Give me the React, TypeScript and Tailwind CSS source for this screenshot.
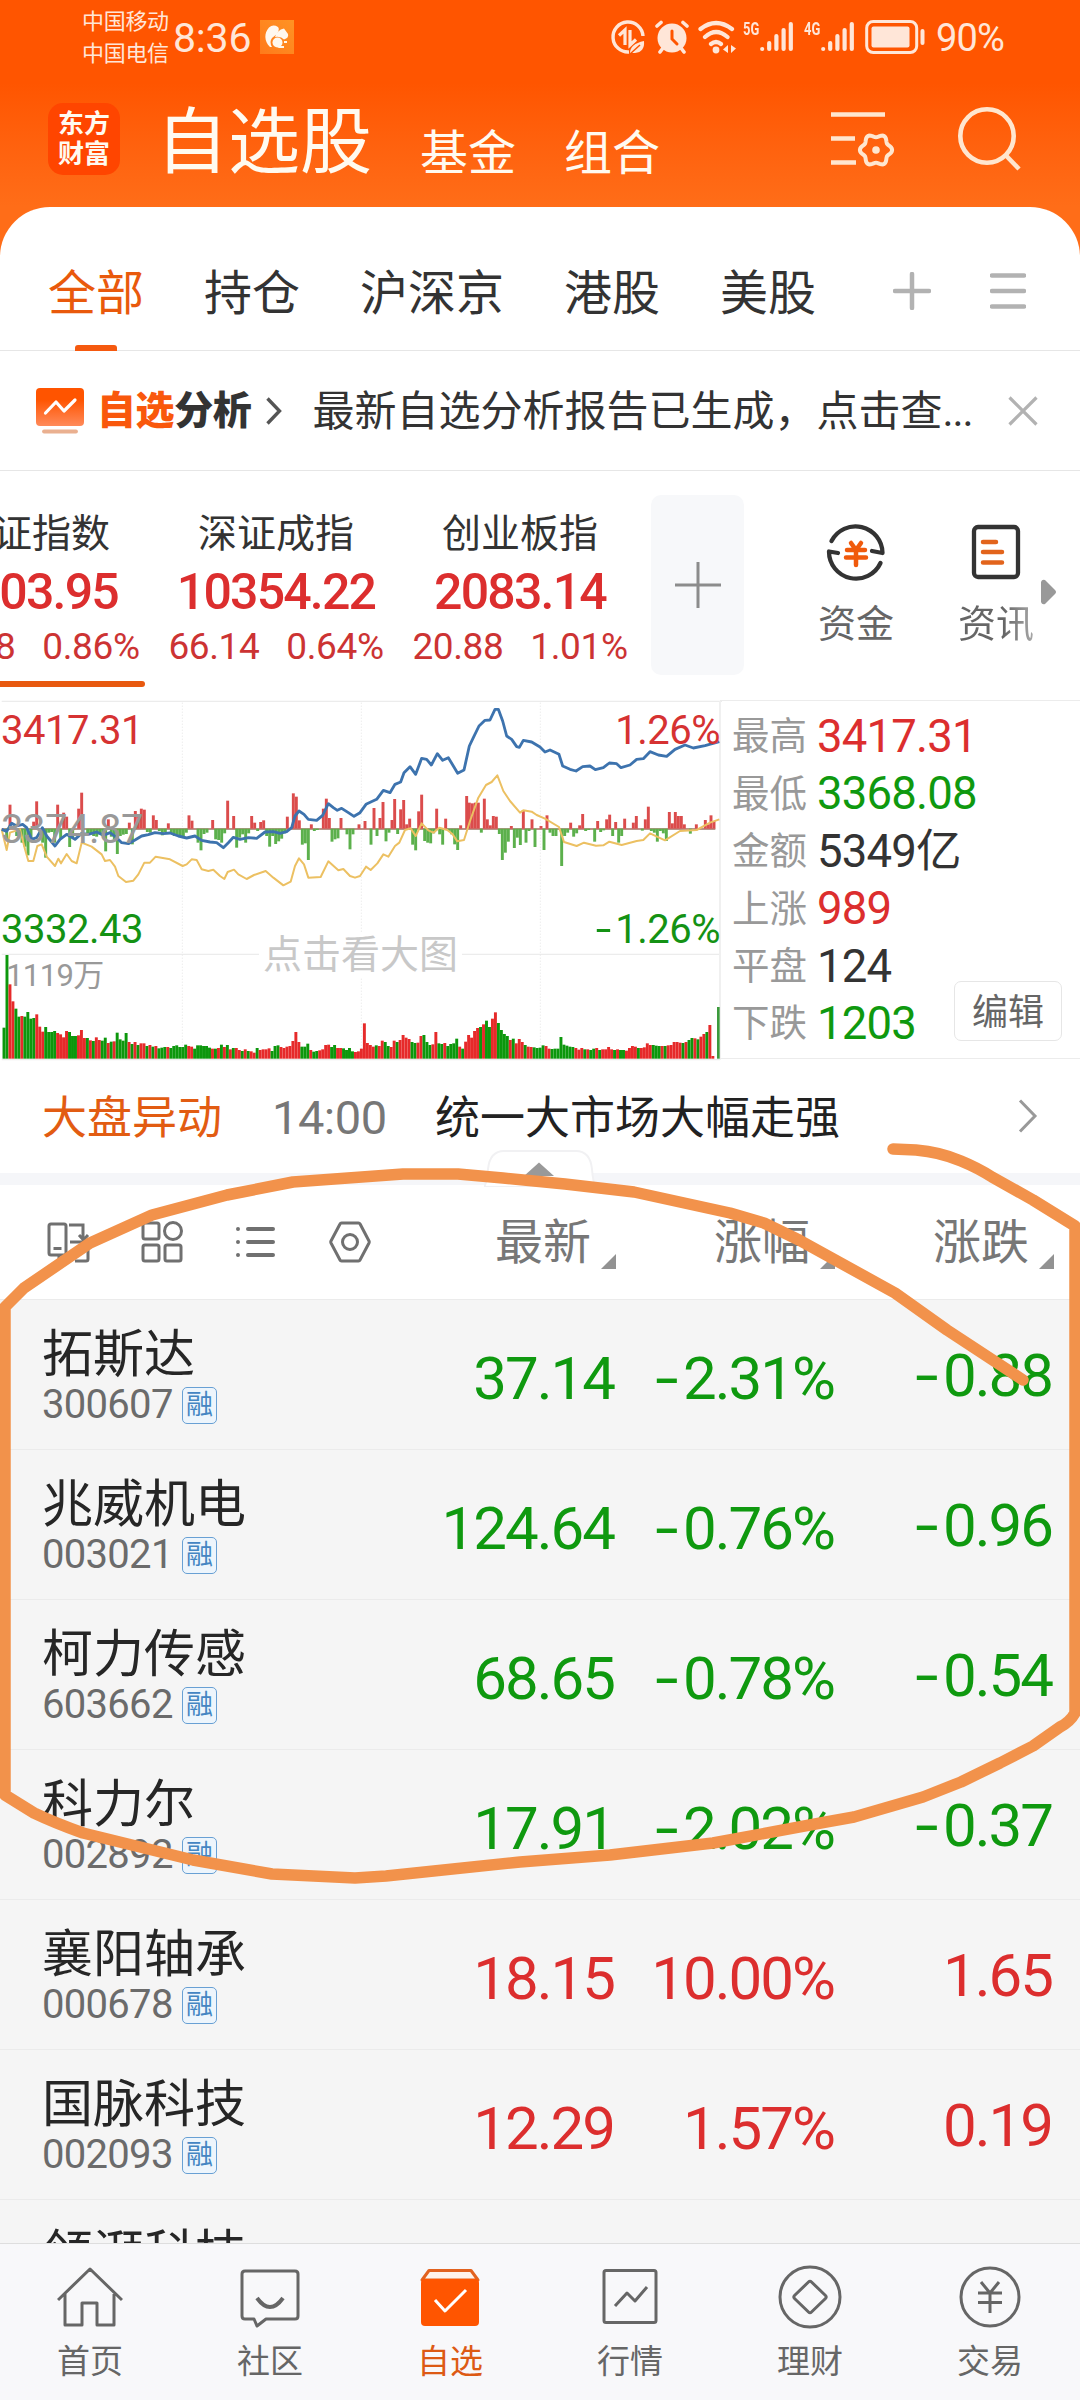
import React from "react";

const RED = "#dc2e2e";
const GREEN = "#0f990f";

/* Volume bar tops, one per minute, on a 0–1088 scale */
const volume =
  "995g 777g 865r 916r 938g 962g 960r 962g 948g 968g 966g 955r 992r 1007r 993g 1008g 1008g 1005g 1011r 1015r 1024r 1005r 1008g 1020g 1020g 1018r 1002r 1026r 1026g 1033r 1035g 1024r 1032r 1034g 1025g 1041r 1037g 1036r 1010g 1030g 1034g 1011g 1038r 1044g 1038r 1047g 1042r 1042r 1050g 1047r 1052g 1050r 1057g 1055g 1053g 1053r 1056g 1050g 1048g 1053g 1053g 1046g 1050r 1052r 1058g 1048g 1048g 1050g 1050g 1055g 1058r 1058g 1056r 1046g 1053r 1047g 1060r 1056g 1056r 1062r 1065g 1060r 1065g 1066r 1070r 1056g 1062r 1060r 1060r 1057r 1065g 1050g 1048g 1053r 1056r 1052r 1050r 1035r 1008r 1038r 1052g 1052g 1043g 1062r 1067g 1065g 1063r 1060r 1047r 1046r 1053g 1047g 1056r 1056r 1057g 1062g 1056g 1066g 1068r 1066r 1058r 982r 1041r 1047r 1052r 1048g 1050r 1034r 1038g 1050g 1053r 1034r 1038g 1032r 1017r 1025r 1029r 1038g 1041g 1040r 1020r 1017g 1038g 1047g 1045r 1008r 1042g 1044g 1041r 1050g 1044g 1042g 1028g 1052r 1058g 1037r 1017r 1025r 1005r 996r 993g 985r 974g 993g 968r 949r 981g 1002g 1014g 1020g 1032r 1028g 1042r 1029r 1038r 1047g 1052r 1053r 1054g 1056g 1055g 1048g 1050r 1058r 1059g 1058g 1058g 1023g 1046g 1049g 1052g 1053g 1056r 1061r 1056r 1060g 1060r 1062g 1058g 1056r 1062g 1060r 1060r 1053r 1060r 1062g 1060r 1062g 1062g 1064r 1056r 1050r 1052r 1056g 1056r 1054r 1042r 1047r 1047g 1049g 1050g 1050r 1050g 1048r 1047r 1038r 1038r 1040r 1041g 1038r 1032g 1026g 1027r 1030g 1022r 1014r 1008g 987r 1080r".split(
    " "
  );

/* Momentum bars around the zero line: x,y pairs; y above 398 is a gain */
const momentum =
  "30,326 101,377 110,316 173,326 191,350 200,362 236,338 245,290 325,370 388,380 406,345 415,358 424,338 433,341 460,358 469,372 505,382 567,358 576,374 638,372 683,314 701,360 755,360 764,380 782,378 791,373 862,362 880,292 889,302 898,373 934,385 970,338 979,308 988,366 1023,366 1077,385 1095,375 1122,336 1140,366 1149,318 1176,372 1184,309 1202,340 1211,312 1220,385 1229,368 1256,346 1265,296 1310,338 1337,368 1382,388 1400,300 1408,320 1417,322 1426,320 1435,320 1453,308 1462,370 1471,388 1480,360 1489,362 1534,390 1570,342 1596,370 1623,390 1641,358 1712,380 1739,388 1748,354 1793,375 1820,370 1829,356 1847,378 1874,368 1900,380 1909,360 1936,370 1945,332 2008,348 2017,382 2026,348 2035,360 2044,360 2053,385 2089,385 2116,372 2125,385 2133,358 2142,375 20,430 50,420 66,440 75,452 84,478 93,430 128,440 137,485 146,410 155,408 164,440 182,428 209,453 218,425 263,415 272,412 281,420 290,422 299,415 308,420 317,466 334,422 343,430 352,474 361,420 370,416 379,414 397,445 442,408 451,410 478,405 487,418 496,408 514,412 523,420 532,418 541,422 550,420 559,410 594,440 603,463 612,414 621,410 647,430 656,432 665,440 674,412 710,455 719,425 728,415 737,440 746,412 773,405 800,420 809,452 818,420 827,444 836,436 845,428 854,412 907,446 916,442 925,492 943,405 952,402 996,437 1005,430 1014,427 1041,415 1050,460 1059,415 1113,446 1131,420 1158,436 1167,410 1193,414 1238,446 1247,463 1274,435 1283,440 1292,442 1301,412 1319,415 1328,446 1346,405 1355,415 1364,445 1373,462 1444,410 1498,414 1507,492 1516,470 1525,437 1543,456 1552,425 1561,447 1578,440 1587,405 1605,453 1632,462 1650,410 1659,420 1668,420 1685,510 1694,420 1703,410 1721,422 1730,412 1757,405 1766,402 1784,437 1802,408 1811,403 1838,420 1856,440 1865,420 1927,404 1954,405 1963,410 1972,437 1981,405 1990,412 1999,435 2071,413"
    .split(" ")
    .map((p) => p.split(",").map(Number));

const priceLine =
  "5,400 20,406 35,382 50,390 68,385 80,395 95,430 110,425 127,395 140,420 155,438 165,450 180,430 200,415 225,430 245,412 265,415 290,408 310,418 330,410 350,425 365,440 385,443 405,432 425,420 445,416 465,410 490,413 510,411 535,420 560,426 585,420 605,433 630,438 650,440 670,455 685,440 700,424 720,430 745,425 770,427 795,408 820,407 840,412 860,407 875,395 885,360 897,345 912,355 925,370 950,373 968,358 985,323 1000,335 1012,343 1025,337 1045,350 1062,361 1080,350 1098,325 1130,310 1150,283 1170,290 1185,265 1202,258 1212,230 1230,212 1247,235 1265,187 1280,190 1294,207 1312,173 1328,193 1345,185 1360,210 1373,232 1392,222 1408,150 1420,125 1437,90 1455,73 1470,72 1485,40 1495,40 1508,75 1520,120 1535,130 1550,152 1558,154 1570,133 1595,138 1620,153 1635,168 1650,162 1677,175 1688,210 1710,220 1728,225 1748,212 1770,210 1786,221 1810,215 1828,201 1850,203 1863,215 1890,207 1910,190 1930,188 1950,167 1975,177 2000,181 2025,160 2055,147 2080,156 2115,149 2158,137";

const averageLine =
  "5,400 20,462 30,410 60,400 75,460 85,495 100,495 112,450 125,445 140,482 165,510 175,488 183,502 200,474 215,495 230,502 245,440 275,452 305,475 315,495 330,492 345,512 355,540 378,558 400,554 415,535 433,500 450,500 467,482 510,490 548,510 560,505 575,490 590,492 605,520 625,525 640,521 660,540 673,549 683,528 702,521 715,535 740,549 762,537 797,525 820,545 850,568 872,557 885,510 897,487 912,505 925,545 962,543 985,496 1015,523 1030,519 1050,540 1065,545 1080,540 1098,512 1112,522 1132,502 1150,475 1165,482 1185,450 1198,440 1215,402 1232,397 1247,420 1265,382 1285,403 1300,410 1318,395 1342,402 1358,415 1372,436 1392,432 1410,375 1435,305 1458,267 1475,258 1492,238 1510,285 1530,315 1560,350 1570,343 1595,347 1610,357 1635,368 1677,393 1692,438 1730,450 1752,440 1788,449 1810,448 1828,437 1865,447 1910,435 1930,432 1950,412 1995,433 2040,405 2090,402 2130,380 2158,370";

const marker =
  "M893 1149L916 1150Q940 1152 961 1161Q978 1168 992 1177L1033 1200L1075 1226V1713Q1070 1722 1060 1727L1033 1746L1000 1763L961 1782L923 1797L854 1817L826 1822L713 1843L610 1855L520 1862L386 1876L355 1878L272 1874L193 1860L83 1833Q55 1823 34 1813L5 1795V1307L24 1288L90 1243L152 1215L227 1195L293 1182L403 1174H458L503 1178L565 1184L634 1192L730 1213L764 1223L799 1240L895 1293L947 1330L1023 1380";

const gear =
  Array.from({ length: 72 }, (_, i) => {
    const a = (i / 72) * Math.PI * 2;
    const r = 14.4 + 1.7 * Math.cos(6 * a);
    return `${i ? "L" : "M"}${(45 + r * Math.cos(a)).toFixed(2)} ${(39 + r * Math.sin(a)).toFixed(2)}`;
  }).join("") + "Z";

function Signal({ label }: { label: string }) {
  return (
    <div className="flex h-[32px] items-start">
      <span className="w-[17px] origin-left scale-x-[0.72] text-[18px] font-bold leading-[15px]">{label}</span>
      <svg width="34" height="32" viewBox="0 0 34 32" stroke="currentColor" strokeWidth="4.2" strokeLinecap="round">
        <path d="M2.2 28v0M9.2 22v6M16.4 15v13M23.6 9v19M30.8 3v25" />
      </svg>
    </div>
  );
}

function StatusBar() {
  return (
    <div className="flex h-[74px] items-center pl-[82px] text-[#ffe6d8]">
      <div className="w-[91px] pt-[1px] text-[22px] leading-[32px] tracking-[-0.3px]">
        <div>中国移动</div>
        <div>中国电信</div>
      </div>
      <div className="w-[87px] pt-[2px] text-[41px] leading-none tracking-[-0.2px]">8:36</div>
      <div className="h-[34px] w-[34px] bg-gradient-to-tr from-[#ff7a1a] to-[#ff9324]">
        <svg width="34" height="34" viewBox="0 0 34 34" fill="#fff8ee">
          <path d="M10 27C4 21 4 13 9 7.500Q13 4 18 7Q20 9 17 14L12 18Q9 22 12 27Z" />
          <path d="M15 17Q17 10 24 8.500L28 14Q29 18 24 19.500Q21 16 15 17Z" />
          <circle cx="17.500" cy="22.500" r="5" />
          <path d="M19 26h5v2h-6zM24 21h3v2h-3z" />
        </svg>
      </div>
      <div className="ml-[316px] flex items-center">
        <svg width="36" height="36" viewBox="0 0 36 36" fill="none" stroke="currentColor">
          <path d="M33 17A15 15 0 1 0 19 33" strokeWidth="3.400" />
          <path d="M15 26V11L9 16.500M20 11V26L26 20.500" strokeWidth="3.200" />
          <path d="M20 34Q20 25 34 22Q35 33 25 34Z" fill="currentColor" stroke="none" />
          <path d="M20 35L30 26" stroke="#ff5500" strokeWidth="1.500" />
        </svg>
        <svg className="ml-[9px]" width="34" height="36" viewBox="0 0 34 36" fill="none" stroke="currentColor" strokeWidth="3.600" strokeLinecap="round">
          <circle cx="17" cy="19" r="14.500" fill="currentColor" stroke="none" />
          <path d="M2 7L6 3.500M32 7L28 3.500M5 33L8 29M29 33L26 29" />
          <path d="M17 12v8l5 5" stroke="#ff5500" strokeWidth="3" />
        </svg>
        <svg className="ml-[9px]" width="40" height="36" viewBox="0 0 40 36" fill="none" stroke="currentColor" strokeWidth="4.200" strokeLinecap="round">
          <path d="M2.500 10Q18 -2 34 10M7 18Q18 8 29.500 18M13 25Q18 21 23 25" />
          <circle cx="18" cy="31" r="3.400" fill="currentColor" stroke="none" />
          <path d="M30 26v8l-5-3.500zM33 26v8l5-4.500z" fill="currentColor" stroke="none" />
        </svg>
        <div className="ml-[5px] flex gap-[10px]">
          <Signal label="5G" />
          <Signal label="4G" />
        </div>
        <svg className="ml-[10px]" width="62" height="36" viewBox="0 0 62 36" fill="none" stroke="currentColor">
          <rect x="1.700" y="2.500" width="50" height="31" rx="6.500" strokeWidth="3" />
          <rect x="6.500" y="7.500" width="38" height="21" rx="2" fill="currentColor" stroke="none" />
          <path d="M57.500 12v12" strokeWidth="4" strokeLinecap="round" />
        </svg>
        <span className="ml-[9px] pt-[2px] text-[38px] leading-none tracking-[-0.9px]">90%</span>
      </div>
    </div>
  );
}

function Header() {
  return (
    <div className="flex h-[133px] items-center pl-[48px] text-[#fffaf0]">
      <div className="mt-[-3px] flex h-[72px] w-[72px] flex-col items-center justify-center rounded-[15px] bg-[#ff4500] text-[26px] font-bold leading-[30px]">
        <span>东方</span>
        <span>财富</span>
      </div>
      <span className="ml-[36px] pt-[4px] text-[72px] leading-none">自选股</span>
      <span className="ml-[48px] pt-[26px] text-[48px] leading-none">基金</span>
      <span className="ml-[48px] pt-[26px] text-[48px] leading-none">组合</span>
      <svg className="ml-[171px] mt-[-2px] text-[#ffe6cf]" width="64" height="60" viewBox="0 0 64 60" fill="none" stroke="currentColor" strokeWidth="4.500">
        <path d="M0 4.500h54M0 28.500h24M0 52.500h25" />
        <path d={gear} transform="translate(0 1)" strokeWidth="4" />
        <circle cx="45" cy="40" r="3.800" fill="currentColor" stroke="none" />
      </svg>
      <svg className="ml-[61px] mt-[-5px] text-[#ffe6cf]" width="68" height="68" viewBox="0 0 68 68" fill="none" stroke="currentColor" strokeWidth="4.600">
        <circle cx="31" cy="32" r="26.700" />
        <path d="M49.500 51L63 65" />
      </svg>
    </div>
  );
}

function Tabs() {
  const tabs = ["全部", "持仓", "沪深京", "港股", "美股"];
  return (
    <div className="flex h-[144px] items-center border-b border-[#e6e6e6] pl-[48px] pt-[26px] text-[48px] leading-none text-[#333]">
      <div className="flex items-center gap-[60px] pt-[4px]">
        {tabs.map((t, i) => (
          <div key={t} className={i === 0 ? "relative text-[#e9590c]" : "relative"}>
            {t}
            {i === 0 && <div className="absolute bottom-[-33px] left-[27px] h-[6px] w-[42px] rounded-t-[3px] bg-[#f5590f]" />}
          </div>
        ))}
      </div>
      <svg className="ml-[77px] mt-[-2px]" width="38" height="38" viewBox="0 0 38 38" stroke="#b2b2b2" strokeWidth="4.500" strokeLinecap="round">
        <path d="M2 19h34M19 2v34" />
      </svg>
      <svg className="ml-[59px] mt-[-2px]" width="36" height="38" viewBox="0 0 36 38" stroke="#b2b2b2" strokeWidth="4.500" strokeLinecap="round">
        <path d="M2 3.500h32M2 19h32M2 34.500h32" />
      </svg>
    </div>
  );
}

function Notice() {
  return (
    <div className="flex h-[120px] items-center border-b border-[#e6e6e6] pl-[36px]">
      <svg width="48" height="48" viewBox="0 0 48 48" fill="none">
        <defs>
          <linearGradient id="noticeFill" x1="0" y1="0" x2="0" y2="1">
            <stop offset="0.300" stopColor="#ff5400" />
            <stop offset="1" stopColor="#ff8a5a" />
          </linearGradient>
        </defs>
        <rect y="1" width="48" height="38" rx="4" fill="url(#noticeFill)" />
        <path d="M9.500 26L20 15L28 24L39 13" stroke="#fff" strokeWidth="3.200" strokeLinecap="round" strokeLinejoin="round" />
        <path d="M8 44.500h32" stroke="#eab090" strokeWidth="3.800" strokeLinecap="round" />
      </svg>
      <span className="ml-[13px] pt-[2px] text-[39px] font-black leading-none tracking-[-0.4px] text-[#f9580c]">
        自选<span className="text-[#333]">分析</span>
      </span>
      <svg className="ml-[14px]" width="18" height="30" viewBox="0 0 18 30" fill="none" stroke="#555" strokeWidth="3.400">
        <path d="M2.500 2.500L14.500 15L2.500 27.500" />
      </svg>
      <span className="ml-[29px] w-[660px] whitespace-nowrap pt-[2px] text-[42px] leading-none text-[#333]">
        最新自选分析报告已生成，点击查<span className="tracking-[-1px]">...</span>
      </span>
      <svg className="ml-[36px]" width="30" height="30" viewBox="0 0 30 30" stroke="#b2b2b2" strokeWidth="3.200">
        <path d="M1.500 1.500L28.500 28.500M28.500 1.500L1.500 28.500" />
      </svg>
    </div>
  );
}

const indices = [
  { name: "上证指数", value: "3403.95", diff: "29.08", pct: "0.86%" },
  { name: "深证成指", value: "10354.22", diff: "66.14", pct: "0.64%" },
  { name: "创业板指", value: "2083.14", diff: "20.88", pct: "1.01%" },
];

function Indices() {
  return (
    <div className="flex h-[229px] overflow-hidden">
      <div className="ml-[-90px] flex flex-none">
        {indices.map((q, i) => (
          <div key={q.name} className="flex w-[244px] flex-none flex-col items-center whitespace-nowrap pt-[44px]">
            <span className="text-[39px] leading-none text-[#333]">{q.name}</span>
            <span className="mt-[13px] text-[50px] font-medium leading-none tracking-[-1.8px] text-[#dc2e2e]">{q.value}</span>
            <span className="mt-[11px] flex gap-[27px] text-[37px] leading-none tracking-[-0.4px] text-[#cc3333]">
              <span>{q.diff}</span>
              <span>{q.pct}</span>
            </span>
            {i === 0 && <span className="mt-[16px] h-[6px] w-[226px] rounded-full bg-[#e8590f]" />}
          </div>
        ))}
      </div>
      <div className="ml-[9px] mt-[24px] flex h-[180px] w-[93px] flex-none items-center justify-center rounded-[10px] bg-[#f7f8fa]">
        <svg width="46" height="46" viewBox="0 0 46 46" stroke="#8c8c8c" strokeWidth="3">
          <path d="M0 23h46M23 0v46" />
        </svg>
      </div>
      <div className="ml-[73px] mt-[49px] flex w-[78px] flex-none flex-col items-center text-[38px] leading-none text-[#666]">
        <svg width="64" height="64" viewBox="0 0 64 64" fill="none" stroke="#333" strokeWidth="4.300" strokeLinecap="round" strokeLinejoin="round">
          <path d="M7.500 21A27 27 0 0 1 58.500 33L48 31" />
          <path d="M56.500 43A27 27 0 0 1 5 31.500L14 33" />
          <path d="M27 23l5 7l5-7M23 30h18M22 37.500h20M32 30v15" stroke="#f05a0c" strokeWidth="4.500" />
        </svg>
        <span className="mt-[21px]">资金</span>
      </div>
      <div className="ml-[62px] mt-[49px] flex w-[78px] flex-none flex-col items-center text-[38px] leading-none text-[#666]">
        <svg width="64" height="64" viewBox="0 0 64 64" fill="none" stroke="#333" strokeWidth="4.300" strokeLinecap="round">
          <rect x="10" y="7" width="44" height="50" rx="4" />
          <path d="M19 22h13M19 32h19M19 42.500h19" stroke="#e2641c" strokeWidth="4.500" />
        </svg>
        <span className="mt-[21px] bg-gradient-to-r from-[#666] from-60% to-[#aaa] bg-clip-text text-transparent">资讯</span>
      </div>
      <svg className="ml-[6px] mt-[108px] flex-none" width="16" height="26" viewBox="0 0 16 26" fill="#999">
        <path d="M0 3Q1 0 4 1L14 11Q16 13 14 15L4 25Q1 26 0 23Z" />
      </svg>
    </div>
  );
}

function Chart() {
  return (
    <div className="relative h-[359px] w-[722px] flex-none text-[40px] leading-none tracking-[-0.5px]">
      {/* intraday price, momentum and volume plot */}
      <svg className="absolute left-0 top-[-4px]" width="722" height="370" viewBox="0 0 2166 1110" fill="none">
        <path d="M5 16H2166M5 775H2160M5 1091H2160" stroke="#ececec" strokeWidth="3.500" />
        <path d="M2160 16V1091" stroke="#f0f0f0" strokeWidth="6" />
        <path d="M547 20V1088M1084 20V1088M1621 20V1088" stroke="#e4e4e4" strokeWidth="3" strokeDasharray="3 6" />
        <path d="M5 399H2146" stroke="#a07060" strokeWidth="4" />
        {momentum.map(([x, y]) => (
          <rect key={x} x={x - 4.4} width="8.800" y={Math.min(y, 398)} height={Math.abs(y - 398)} fill={y < 398 ? "#db4c4c" : "#5cb04c"} />
        ))}
        {volume.map((v, i) => {
          const y = parseInt(v, 10);
          return <rect key={i} x={12 + i * 8.935 - 4.4} width="8.800" y={y} height={1088 - y} fill={v.endsWith("g") ? "#0c970c" : "#e62a2a"} />;
        })}
        <rect x="2151" y="933" width="8" height="155" fill="#3c9a3c" />
        <polyline points={averageLine} stroke="#ecc062" strokeWidth="6" strokeLinejoin="round" />
        <polyline points={priceLine} stroke="#3d73ae" strokeWidth="8.500" strokeLinejoin="round" />
      </svg>
      <span className="absolute left-[1px] top-[11px] text-[#d63232]">3417.31</span>
      <span className="absolute left-[1px] top-[110px] text-[#999]">3374.87</span>
      <span className="absolute left-[1px] top-[210px] text-[#149214]">3332.43</span>
      <span className="absolute right-[2px] top-[11px] text-[#d63232]">1.26%</span>
      <span className="absolute right-[2px] top-[210px] text-[#149214]"><Minus />1.26%</span>
      <span className="absolute left-[6px] top-[260px] text-[31px] tracking-[-0.6px] text-[#999]">1119万</span>
      <span className="absolute left-[259px] top-[232px] bg-white px-[4px] text-[39px] leading-[46px] tracking-normal text-[#c8c8c8]">点击看大图</span>
    </div>
  );
}

function Minus() {
  return <span className="mr-[0.12em] inline-block origin-right scale-x-[1.4]">-</span>;
}

const stats: [string, string, string][] = [
  ["最高", "3417.31", RED],
  ["最低", "3368.08", GREEN],
  ["金额", "5349亿", "#333"],
  ["上涨", "989", RED],
  ["平盘", "124", "#333"],
  ["下跌", "1203", GREEN],
];

function Stats() {
  return (
    <div className="relative ml-[-2px] flex-1 border-b border-t border-[#ececec] pl-[12px] pt-[7px]">
      {stats.map(([k, v, c]) => (
        <div key={k} className="flex h-[57.4px] items-center leading-none">
          <span className="w-[85px] pt-[1px] text-[37.500px] text-[#999]">{k}</span>
          <span className="text-[45.500px] tracking-[-0.8px]" style={{ color: c }}>
            {v}
          </span>
        </div>
      ))}
      <div className="absolute bottom-[17px] right-[18px] flex h-[60px] w-[108px] items-center justify-center rounded-[7px] border border-[#e6e6e6] bg-white pt-[4px] text-[36px] leading-none text-[#666]">
        编辑
      </div>
    </div>
  );
}

function News() {
  return (
    <div className="relative flex h-[126px] items-center border-b-[12px] border-[#f5f6f9] pl-[42px] text-[45px] leading-none">
      <span className="pt-[4px] text-[#e25c12]">大盘异动</span>
      <span className="ml-[50px] w-[163px] pt-[2px] text-[47px] tracking-[-0.5px] text-[#777]">14:00</span>
      <span className="pt-[4px] text-[#222]">统一大市场大幅走强</span>
      <svg className="ml-[178px]" width="20" height="34" viewBox="0 0 20 34" fill="none" stroke="#999" strokeWidth="3">
        <path d="M2 1.500L17 17L2 32.500" />
      </svg>
      {/* collapse handle */}
      <svg className="absolute bottom-[-14px] left-[484px]" width="112" height="38" viewBox="0 0 112 38">
        <path d="M0 38Q3 34 4 20Q6 2 20 2H92Q106 2 108 20Q109 34 112 38Z" fill="#fff" stroke="#f1f1f3" strokeWidth="2" />
        <path d="M55 13.500L70 27H40Z" fill="#999" />
      </svg>
    </div>
  );
}

function ColumnTitle({ children }: { children: string }) {
  return (
    <div className="flex w-[121px] flex-none items-center">
      <span className="flex-none whitespace-nowrap pt-[2px]">{children}</span>
      <svg className="ml-[10px] mt-[38px] flex-none" width="15" height="15" viewBox="0 0 15 15" fill="#929292">
        <path d="M15 0V15H0Z" />
      </svg>
    </div>
  );
}

function ListHeader() {
  return (
    <div className="flex h-[114px] items-center pl-[47px] text-[48px] leading-none text-[#777]">
      <svg width="43" height="44" viewBox="0 0 43 44" fill="none" stroke="#707070" strokeWidth="3">
        <rect x="2" y="4" width="17" height="31" rx="2" />
        <path d="M6.500 28.500h8M12 35v5h5M22 5h14v14M32 15l4.500 5L41 15M23 22h18v17q0 2-2 2H28" />
      </svg>
      <svg className="ml-[51px]" width="43" height="44" viewBox="0 0 43 44" fill="none" stroke="#707070" strokeWidth="3">
        <rect x="2" y="3" width="16" height="16" rx="2" />
        <rect x="2" y="25" width="16" height="16" rx="2" />
        <rect x="24" y="25" width="16" height="16" rx="2" />
        <circle cx="32" cy="11" r="8.500" />
      </svg>
      <svg className="ml-[52px]" width="39" height="44" viewBox="0 0 39 44" stroke="#707070" strokeWidth="4" strokeLinecap="round">
        <path d="M2 9h0M2 22h0M2 35h0M12 9h25M12 22h25M12 35h25" />
      </svg>
      <svg className="ml-[54px]" width="42" height="44" viewBox="0 0 42 44" fill="none" stroke="#707070" strokeWidth="3" strokeLinejoin="round">
        <path d="M12.500 3h17q1 0 1.600 1L40 21q.5 1 0 2L31 40q-.5 1-1.500 1h-17q-1 0-1.500-1L2 23q-.5-1 0-2L11 4q.5-1 1.500-1Z" />
        <circle cx="21" cy="22" r="7.500" />
      </svg>
      <div className="ml-[124px] flex gap-[98px]">
        <ColumnTitle>最新</ColumnTitle>
        <ColumnTitle>涨幅</ColumnTitle>
        <ColumnTitle>涨跌</ColumnTitle>
      </div>
    </div>
  );
}

const stocks: [string, string, string, string, string][] = [
  ["拓斯达", "300607", "37.14", "-2.31%", "-0.88"],
  ["兆威机电", "003021", "124.64", "-0.76%", "-0.96"],
  ["柯力传感", "603662", "68.65", "-0.78%", "-0.54"],
  ["科力尔", "002892", "17.91", "-2.02%", "-0.37"],
  ["襄阳轴承", "000678", "18.15", "10.00%", "1.65"],
  ["国脉科技", "002093", "12.29", "1.57%", "0.19"],
  ["领湃科技", "", "", "", ""],
];

function Num({ value }: { value: string }) {
  return value.startsWith("-") ? (
    <>
      <Minus />
      {value.slice(1)}
    </>
  ) : (
    <>{value}</>
  );
}

function StockList() {
  return (
    <div className="h-[944px] flex-none overflow-hidden bg-[#f5f5f5]">
      {stocks.map(([name, code, price, pct, diff]) => (
        <div
          key={name}
          className={`flex h-[150px] border-t border-[#ebebeb] pl-[42px] text-[60px] leading-none tracking-[-2px] ${pct.startsWith("-") ? "text-[#0f990f]" : "text-[#dc2e2e]"}`}
        >
          <div className="w-[350px] pt-[29px] tracking-normal">
            <div className="text-[51px] leading-none text-[#262626]">{name}</div>
            {code && (
              <div className="mt-[5px] flex items-center">
                <span className="w-[140px] text-[40px] leading-none tracking-[-0.7px] text-[#6b6b6b]">{code}</span>
                <span className="flex h-[37px] w-[35px] items-center justify-center rounded-[5px] border-[1.500px] border-[#68a0d4] bg-[#edf5fc] text-[27px] leading-none text-[#4485c2]">
                  融
                </span>
              </div>
            )}
          </div>
          <div className="w-[222px] pt-[49px] text-right">{price}</div>
          <div className="w-[220px] pt-[49px] text-right"><Num value={pct} /></div>
          <div className="w-[218px] pt-[46px] text-right"><Num value={diff} /></div>
        </div>
      ))}
    </div>
  );
}

const navItems = [
  {
    label: "首页",
    icon: <path d="M1 36L33 5L65 36M8 30V61H25V39H40V61H57V30" />,
  },
  {
    label: "社区",
    icon: (
      <>
        <path d="M8 7H58Q61 7 61 10V52Q61 55 58 55H29L20 62L17 55H8Q5 55 5 52V10Q5 7 8 7Z" />
        <path d="M20 34Q33 52 46 34" strokeWidth="4" />
      </>
    ),
  },
  {
    label: "自选",
    icon: (
      <>
        <path d="M5 16L12 6.500H54L61 16Z" stroke="#e2621f" fill="#fff3ea" />
        <rect x="4" y="15" width="58" height="47" rx="4" fill="#ff5500" stroke="none" />
        <path d="M18 36L28 47L49 26" stroke="#fff" />
      </>
    ),
  },
  {
    label: "行情",
    icon: (
      <>
        <rect x="7" y="6.500" width="52" height="52" rx="2" />
        <path d="M18 42L30 29L38 37L50 23" />
      </>
    ),
  },
  {
    label: "理财",
    icon: (
      <>
        <circle cx="33" cy="33" r="30" />
        <path d="M31.500 18Q33 16.500 34.500 18L48.500 31.500Q50 33 48.500 34.500L34.500 48Q33 49.500 31.500 48L17.500 34.500Q16 33 17.500 31.500Z" />
      </>
    ),
  },
  {
    label: "交易",
    icon: (
      <>
        <circle cx="33" cy="33" r="29" />
        <path d="M24 18L33 29L42 18M33 29V49M21 29H45M21 38.500H45" />
      </>
    ),
  },
];

function BottomNav() {
  return (
    <div className="flex h-[157px] flex-none border-t border-[#dedede] bg-[#f8f8fa]">
      {navItems.map(({ label, icon }) => (
        <div
          key={label}
          className={`flex w-[180px] flex-col items-center pt-[20px] text-[33px] leading-none ${label === "自选" ? "text-[#dd5a14]" : "text-[#666]"}`}
        >
          <svg width="66" height="66" viewBox="0 0 66 66" fill="none" stroke="currentColor" strokeWidth="3" strokeLinejoin="round">
            {icon}
          </svg>
          <span className="mt-[15px]">{label}</span>
        </div>
      ))}
    </div>
  );
}

export default function App() {
  return (
    <div className="relative flex h-[2400px] w-[1080px] flex-col overflow-hidden bg-[#ff6d18] font-['Roboto','Noto_Sans_CJK_SC',sans-serif]">
      <div className="h-[207px] flex-none bg-gradient-to-b from-[#ff5500] from-40% to-[#ff6d18]">
        <StatusBar />
        <Header />
      </div>
      <div className="flex flex-1 flex-col rounded-t-[50px] bg-white">
        <Tabs />
        <Notice />
        <Indices />
        <div className="flex h-[359px] flex-none">
          <Chart />
          <Stats />
        </div>
        <News />
        <ListHeader />
        <StockList />
        <BottomNav />
      </div>
      <svg className="pointer-events-none absolute left-0 top-0" width="1080" height="2400" viewBox="0 0 1080 2400" fill="none">
        <path d={marker} stroke="#f2924b" strokeWidth="11.500" strokeLinecap="round" strokeLinejoin="round" />
      </svg>
    </div>
  );
}
